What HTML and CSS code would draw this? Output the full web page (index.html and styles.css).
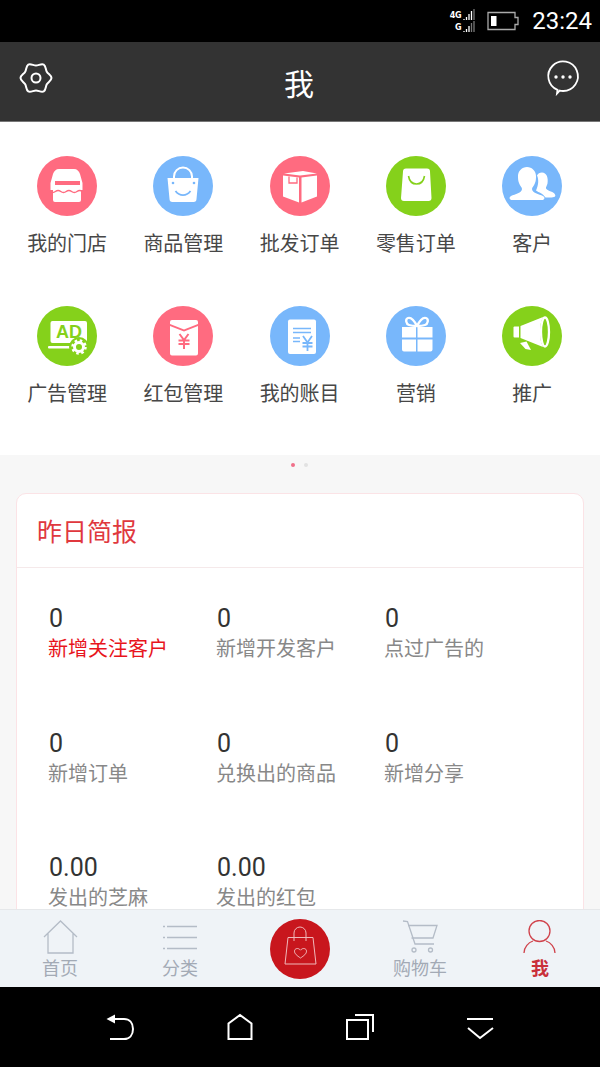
FILE: index.html
```html
<!DOCTYPE html>
<html lang="zh-CN">

<head>
    <meta charset="UTF-8">
    <meta name="viewport" content="width=device-width, initial-scale=1.0">
    <title>我</title>
    <link rel="stylesheet" href="styles.css">
</head>

<body>

    <!-- Status bar -->
    <div class="status-bar">
        <div class="signal">
            <div class="signal-row"><span>4G</span>
                <svg width="14" height="12" viewBox="2 0 14 12"><path d="M5 10v1M7.500 8v3M10 5v6M12.500 2v9" stroke="#fff" stroke-width="1.300"/><path d="M15 0v11" stroke="#777" stroke-width="1.300"/></svg>
            </div>
            <div class="signal-row"><span>G</span>
                <svg width="14" height="12" viewBox="2 0 14 12"><path d="M5 10v1M7.500 8v3M10 5v6" stroke="#fff" stroke-width="1.300"/><path d="M12.500 2v9M15 0v11" stroke="#777" stroke-width="1.300"/></svg>
            </div>
        </div>
        <svg class="battery" width="33" height="20" viewBox="0 0 33 20">
            <path d="M1 1.500h27v5h3v7h-3v5h-27z" fill="none" stroke="#aaa" stroke-width="1.300"/>
            <rect x="4" y="5" width="5.500" height="10" fill="#fff"/>
        </svg>
        <span class="clock">23:24</span>
    </div>

    <!-- Header -->
    <header class="top-bar">
        <svg class="top-icon" width="32" height="32" viewBox="0 0 32 32" fill="none" stroke="#fff" stroke-width="2" stroke-linejoin="round">
            <path d="M31.500 16C31.500 13.500 28.050 11.920 26.800 9.750C25.550 7.580 25.920 3.830 23.750 2.580C21.580 1.330 18.500 3.500 16 3.500C13.500 3.500 10.420 1.330 8.250 2.580C6.080 3.830 6.450 7.580 5.200 9.750C3.950 11.920 .5 13.500 .5 16C.5 18.500 3.950 20.080 5.200 22.250C6.450 24.420 6.080 28.170 8.250 29.420C10.420 30.670 13.500 28.500 16 28.500C18.500 28.500 21.580 30.670 23.750 29.420C25.920 28.170 25.550 24.420 26.800 22.250C28.050 20.080 31.500 18.500 31.500 16z"/>
            <circle cx="16" cy="16" r="4.500"/>
        </svg>
        <h1>我</h1>
        <svg class="top-icon" width="34" height="34" viewBox="0 -2 34 34" fill="none" stroke="#fff" stroke-width="1.800">
            <path d="M11 30.500l.5-3.600a14.800 14.800 0 1 1 5.500 1.100c-1.200 0-2.300-.1-3.300-.4z"/>
            <circle cx="10" cy="14" r="1.700" fill="#fff" stroke="none"/>
            <circle cx="17" cy="14" r="1.700" fill="#fff" stroke="none"/>
            <circle cx="24" cy="14" r="1.700" fill="#fff" stroke="none"/>
        </svg>
    </header>

    <main class="content">

        <!-- Menu grid -->
        <section class="menu">
            <div class="menu-item">
                <svg class="menu-icon pink" viewBox="0 0 60 60">
                    <path d="M23 13h14c3 0 5 2 6 5l2.500 9v7H44v10a2 2 0 0 1-2 2H18a2 2 0 0 1-2-2V34h-2.500v-7L16 18c1-3 3-5 6-5z" fill="#fff"/>
                    <rect x="18" y="25" width="25" height="4" fill="#ff6b80"/>
                    <path d="M13 35.500q2.700 2 5.400 0t5.400 0 5.400 0 5.400 0 5.400 0 5.400 0" fill="none" stroke="#ff6b80" stroke-width="1.500"/>
                </svg>
                <span>我的门店</span>
            </div>
            <div class="menu-item">
                <svg class="menu-icon blue" viewBox="0 0 60 60">
                    <path d="M21 24v-3.500a9 9 0 0 1 18 0V24" fill="none" stroke="#fff" stroke-width="2"/>
                    <path d="M14.500 22h31l-2 21a3 3 0 0 1-3 3h-21a3 3 0 0 1-3-3z" fill="#fff"/>
                    <circle cx="20" cy="27" r="1.300" fill="#78b7fb"/>
                    <circle cx="41" cy="27" r="1.300" fill="#78b7fb"/>
                    <path d="M22.500 35c4 5.500 11 5.500 15 0" fill="none" stroke="#78b7fb" stroke-width="1.800"/>
                </svg>
                <span>商品管理</span>
            </div>
            <div class="menu-item">
                <svg class="menu-icon pink" viewBox="0 0 60 60">
                    <path d="M14 17.500L33 15l14 2.500L30 19.500z" fill="#fff"/>
                    <path d="M13 19.500l16 2v25l-16-6z" fill="#fff"/>
                    <path d="M31.500 21.500L47 19.500v21l-15.500 6z" fill="#fff"/>
                    <path d="M19 20.500v6.500h8v-5.500" fill="none" stroke="#ff6b80" stroke-width="1.300"/>
                </svg>
                <span>批发订单</span>
            </div>
            <div class="menu-item">
                <svg class="menu-icon green" viewBox="0 0 60 60">
                    <path d="M20 12.500h21a3 3 0 0 1 3 3l1.500 26.500a3 3 0 0 1-3 3H18a3 3 0 0 1-3-3l2-26.500a3 3 0 0 1 3-3z" fill="#fff"/>
                    <path d="M22.500 20c1 6 4 8 8 8s7-2 8-8" fill="none" stroke="#85d11b" stroke-width="1.600"/>
                </svg>
                <span>零售订单</span>
            </div>
            <div class="menu-item">
                <svg class="menu-icon blue" viewBox="0 0 60 60">
                    <path d="M48 41.500c5 0 6-1 5-3-1-3-7-3-9-6-.5-1 1-3 1.500-5 1-6-1-11-5.500-11-2.500 0-4 1-5 3 2 4 1.500 10-1 15 3 2 7 3 9.500 7z" fill="#fff"/>
                    <path d="M9 44c-2-1-2-3 0-4 4-2 11-3 11-7 0-2-2-3-3-6-1-2-1-5-1-7 0-5 4-9 9-9s9 4 9 9c0 2 0 5-1 7-1 3-3 4-3 6 0 4 7 5 11 7 2 1 2 3 0 4z" fill="#fff"/>
                </svg>
                <span>客户</span>
            </div>
            <div class="menu-item">
                <svg class="menu-icon green" viewBox="0 0 60 60">
                    <rect x="13.500" y="15" width="36.500" height="22" rx="2" fill="#fff"/>
                    <rect x="11" y="40" width="23" height="2.500" rx="1" fill="#fff"/>
                    <text class="ad-text" x="19" y="32">AD</text>
                    <circle cx="42" cy="41" r="10" fill="#85d11b"/>
                    <circle cx="42" cy="41" r="4.500" fill="none" stroke="#fff" stroke-width="3"/>
                    <circle cx="42" cy="41" r="6.500" fill="none" stroke="#fff" stroke-width="2.500" stroke-dasharray="2.500 2.600"/>
                </svg>
                <span>广告管理</span>
            </div>
            <div class="menu-item">
                <svg class="menu-icon pink" viewBox="0 0 60 60">
                    <path d="M19 14h24a2 2 0 0 1 2 2v2L31 23.500 17 18v-2a2 2 0 0 1 2-2z" fill="#fff"/>
                    <path d="M17 20l14 5.500L45 20v27.500a2 2 0 0 1-2 2H19a2 2 0 0 1-2-2z" fill="#fff"/>
                    <path d="M26.500 28l4.500 6 4.500-6M25.500 34.500h11M25.500 38h11M31 34v9" fill="none" stroke="#ff6b80" stroke-width="2"/>
                </svg>
                <span>红包管理</span>
            </div>
            <div class="menu-item">
                <svg class="menu-icon blue" viewBox="0 0 60 60">
                    <rect x="18" y="13.500" width="28" height="34.500" rx="2" fill="#fff"/>
                    <path d="M23 22.500h18M23 26.500h18M23 32h7M23 35.500h7" stroke="#78b7fb" stroke-width="1.700"/>
                    <path d="M33 30l4.500 6.500 4.500-6.500M32.500 37h10M32.500 40.500h10M37.500 36v9" fill="none" stroke="#78b7fb" stroke-width="1.800"/>
                </svg>
                <span>我的账目</span>
            </div>
            <div class="menu-item">
                <svg class="menu-icon blue" viewBox="0 0 60 60">
                    <path d="M31 20c-3-6-6-9-9-8-3 1-2 6 1 7 3 1 6 1 8 1zM31 20c3-6 6-9 9-8 3 1 2 6-1 7-3 1-6 1-8 1z" fill="none" stroke="#fff" stroke-width="2.300"/>
                    <path d="M16 21h14v10.500H16zM31.500 21h15v10.500h-15zM16 33.500h14v12H18a2 2 0 0 1-2-2zM31.500 33.500h15v10a2 2 0 0 1-2 2h-13z" fill="#fff"/>
                </svg>
                <span>营销</span>
            </div>
            <div class="menu-item">
                <svg class="menu-icon green" viewBox="0 0 60 60">
                    <path d="M12.500 20.500h4.500v11h-4.500a1 1 0 0 1-1-1v-9a1 1 0 0 1 1-1z" fill="#fff"/>
                    <path d="M18.500 20L41 11c-2 4-3 9-3 15s1 11 3 15l-22.500-9z" fill="#fff"/>
                    <ellipse cx="43" cy="26" rx="4" ry="14.500" fill="none" stroke="#fff" stroke-width="2.300"/>
                    <path d="M18 37l6.500-1.500L29 44l-5.500-1z" fill="#fff"/>
                </svg>
                <span>推广</span>
            </div>
        </section>

        <!-- Pager dots -->
        <div class="dots">
            <i class="dot active"></i>
            <i class="dot"></i>
        </div>

        <!-- Yesterday report -->
        <section class="report">
            <h2>昨日简报</h2>
            <div class="stats">
                <div class="stat hot"><b>0</b><span>新增关注客户</span></div>
                <div class="stat"><b>0</b><span>新增开发客户</span></div>
                <div class="stat"><b>0</b><span>点过广告的</span></div>
                <div class="stat"><b>0</b><span>新增订单</span></div>
                <div class="stat"><b>0</b><span>兑换出的商品</span></div>
                <div class="stat"><b>0</b><span>新增分享</span></div>
                <div class="stat"><b>0.00</b><span>发出的芝麻</span></div>
                <div class="stat"><b>0.00</b><span>发出的红包</span></div>
            </div>
        </section>
    </main>

    <!-- Tab bar -->
    <nav class="tabs">
        <div class="tab">
            <svg width="36" height="34" viewBox="0 0 36 34" fill="none" stroke="#b4bcc7" stroke-width="1.300">
                <path d="M2 17L18.500 1 35 17M6 13v20h25V13"/>
            </svg>
            <span>首页</span>
        </div>
        <div class="tab">
            <svg width="36" height="34" viewBox="0 0 36 34" fill="none" stroke="#b4bcc7" stroke-width="1.300">
                <path d="M5 6.500h30M5 17.500h30M5 28.500h30"/>
                <path d="M1 6.500h2M1 17.500h2M1 28.500h2"/>
            </svg>
            <span>分类</span>
        </div>
        <div class="tab-center">
            <svg width="60" height="60" viewBox="0 0 60 60">
                <circle cx="30" cy="30" r="30" fill="#c8161d"/>
                <g fill="none" stroke="#f0b8ba" stroke-width="1">
                    <path d="M18 18.500h25l3 26.500H15z"/>
                    <path d="M24 22v-8a6 6 0 0 1 12 0v8"/>
                    <path d="M30.500 39c-3.500-2.300-6-4.300-6-6.800 0-3 4-3.700 6-1 2-2.700 6-2 6 1 0 2.500-2.500 4.500-6 6.800z"/>
                </g>
            </svg>
        </div>
        <div class="tab">
            <svg width="38" height="34" viewBox="0 0 38 34" fill="none" stroke="#b4bcc7" stroke-width="1.300">
                <path d="M2 1l4.500.5L14 24h19"/>
                <path d="M7 5.500h29L32 18H10.500"/>
                <circle cx="13" cy="30" r="2"/>
                <circle cx="29.500" cy="30" r="2"/>
            </svg>
            <span>购物车</span>
        </div>
        <div class="tab current">
            <svg width="36" height="34" viewBox="0 0 36 34" fill="none" stroke="#d0434c" stroke-width="1.300">
                <circle cx="17.500" cy="11" r="10.500"/>
                <path d="M2 33c0-6 4.500-10.500 9-12M33 33c0-6-4.500-10.500-9-12"/>
            </svg>
            <span>我</span>
        </div>
    </nav>

    <!-- Android buttons -->
    <footer class="nav-bar">
        <svg width="30" height="28" viewBox="0 0 30 28" fill="none" stroke="#fff" stroke-width="2">
            <path d="M6 6h13c5.500 0 9 4 9 10s-3.500 10-9 10H5"/>
            <path d="M1.500 6L10 1.500v9z" fill="#fff" stroke="none"/>
        </svg>
        <svg width="28" height="28" viewBox="0 0 28 28" fill="none" stroke="#fff" stroke-width="2">
            <path d="M2.500 26V10.500L14 2l11.500 8.500V26z"/>
        </svg>
        <svg width="30" height="28" viewBox="0 0 30 28" fill="none" stroke="#fff" stroke-width="2">
            <rect x="3" y="7" width="21" height="19"/>
            <path d="M11 2h18v17"/>
        </svg>
        <svg width="30" height="28" viewBox="0 0 30 28" fill="none" stroke="#fff" stroke-width="2">
            <path d="M2 6h26M3 15l12 10 13-10"/>
        </svg>
    </footer>

</body>

</html>
```

FILE: styles.css
```css
/* Global styles */
* {
    margin: 0;
    padding: 0;
    box-sizing: border-box;
}

body {
    width: 600px;
    height: 1067px;
    display: flex;
    flex-direction: column;
    overflow: hidden;
    font-family: "Noto Sans CJK SC", "Liberation Sans", sans-serif;
    background-color: #f7f7f7;
}

/* Status bar */
.status-bar {
    height: 42px;
    flex: none;
    display: flex;
    align-items: center;
    justify-content: flex-end;
    padding-right: 8px;
    background-color: #000;
    color: #fff;
}

.signal {
    margin-right: 12px;
    width: 27px;
}

.signal-row {
    height: 12px;
    display: flex;
    align-items: center;
    justify-content: flex-end;
    font-family: "DejaVu Sans", sans-serif;
    font-size: 8px;
    font-weight: bold;
    letter-spacing: -0.3px;
}

.battery {
    margin-right: 12px;
}

.clock {
    font-family: Roboto, sans-serif;
    font-size: 24px;
    line-height: 28px;
}

/* Header */
.top-bar {
    height: 80px;
    flex: none;
    display: flex;
    align-items: center;
    justify-content: space-between;
    padding: 0 20px;
    background-color: #333;
    border-bottom: 1px solid #777;
}

.top-bar h1 {
    font-size: 30px;
    font-weight: normal;
    line-height: 76px;
    color: #fff;
}

.top-icon {
    margin-top: -8px;
    overflow: visible;
}

/* Main area, cut off by the tab bar */
.content {
    flex: 1;
    min-height: 0;
    overflow: hidden;
}

/* Menu grid */
.menu {
    height: 333px;
    padding: 34px 0 0 9px;
    display: grid;
    grid-template-columns: repeat(5, 116.25px);
    grid-auto-rows: 150px;
    background-color: #fff;
}

.menu-item {
    display: flex;
    flex-direction: column;
    align-items: center;
    font-size: 20px;
    line-height: 28px;
    color: #474747;
}

.menu-icon {
    width: 60px;
    height: 60px;
    margin-bottom: 13px;
    border-radius: 50%;
}

.pink {
    background-color: #ff6b80;
}

.blue {
    background-color: #78b7fb;
}

.green {
    background-color: #85d11b;
}

.ad-text {
    font-family: "Liberation Sans", sans-serif;
    font-size: 18px;
    font-weight: bold;
    fill: #85d11b;
}

/* Pager dots */
.dots {
    height: 20px;
    display: flex;
    align-items: center;
    justify-content: center;
    gap: 9px;
    padding-right: 1px;
}

.dot {
    width: 4px;
    height: 4px;
    border-radius: 50%;
    background-color: #e2e2e2;
}

.dot.active {
    background-color: #f0708a;
}

/* Report card */
.report {
    margin: 18px 16px 0;
    background-color: #fff;
    border: 1px solid #fbe3e6;
    border-radius: 10px;
}

.report h2 {
    height: 74px;
    padding-left: 20px;
    font-size: 25px;
    font-weight: normal;
    line-height: 72px;
    color: #e0383e;
    border-bottom: 1px solid #f5e9ea;
}

.stats {
    display: grid;
    grid-template-columns: repeat(3, 168px);
    grid-auto-rows: 124.5px;
    padding: 35px 0 0 31px;
}

.stat b {
    display: block;
    padding-left: 1px;
    font-family: Roboto, sans-serif;
    font-size: 25px;
    font-weight: normal;
    line-height: 32px;
    color: #333;
}

.stat span {
    display: block;
    margin-top: -1px;
    font-size: 20px;
    line-height: 28px;
    color: #888;
}

.stat.hot span {
    color: #e8141c;
}

/* Tab bar */
.tabs {
    height: 78px;
    flex: none;
    display: grid;
    grid-template-columns: repeat(5, 120px);
    background-color: #eff3f7;
    border-top: 1px solid #e6e8ea;
}

.tab {
    padding-top: 10px;
    display: flex;
    flex-direction: column;
    align-items: center;
    font-size: 18px;
    line-height: 26px;
    color: #a3aab5;
}

.tab.current {
    color: #c9303a;
    font-weight: bold;
}

.tab-center {
    padding-top: 9px;
    display: flex;
    justify-content: center;
}

/* Android buttons */
.nav-bar {
    height: 80px;
    flex: none;
    display: flex;
    align-items: center;
    justify-content: space-between;
    padding: 0 105px;
    background-color: #000;
}
```
